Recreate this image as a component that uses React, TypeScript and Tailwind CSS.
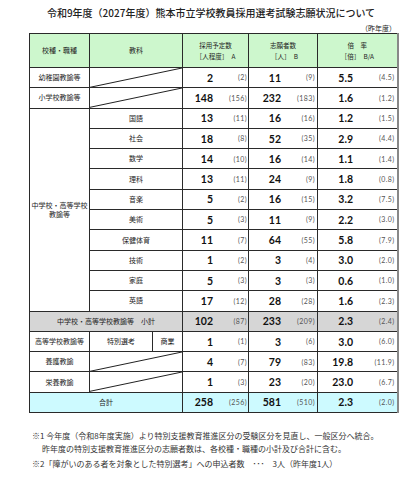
import * as React from "react";

type Vals = [string, string, string, string, string, string];

const subjects: { name: string; v: Vals }[] = [
  { name: "国語", v: ["13", "11", "16", "16", "1.2", "1.5"] },
  { name: "社会", v: ["18", "8", "52", "35", "2.9", "4.4"] },
  { name: "数学", v: ["14", "10", "16", "14", "1.1", "1.4"] },
  { name: "理科", v: ["13", "11", "24", "9", "1.8", "0.8"] },
  { name: "音楽", v: ["5", "2", "16", "15", "3.2", "7.5"] },
  { name: "美術", v: ["5", "3", "11", "9", "2.2", "3.0"] },
  { name: "保健体育", v: ["11", "7", "64", "55", "5.8", "7.9"] },
  { name: "技術", v: ["1", "2", "3", "4", "3.0", "2.0"] },
  { name: "家庭", v: ["5", "3", "3", "3", "0.6", "1.0"] },
  { name: "英語", v: ["17", "12", "28", "28", "1.6", "2.3"] },
];

const cell = "border border-[#2a2a2a] p-0";
const label = "text-[7px] leading-[9px] text-[#222] text-center";

function Nums({ v }: { v: Vals }) {
  return (
    <>
      <td className={cell}>
        <div className="flex items-center">
          <span className="w-[30px] text-right text-[10.5px] leading-[12px] font-bold font-['Lato',sans-serif] text-[#111]">{v[0]}</span>
          <span className="flex-1 text-right pr-[1px] text-[7px] tracking-[0.4px] font-['Lato',sans-serif] text-[#555]">({v[1]})</span>
        </div>
      </td>
      <td className={cell}>
        <div className="flex items-center">
          <span className="w-[32px] text-right text-[10.5px] leading-[12px] font-bold font-['Lato',sans-serif] text-[#111]">{v[2]}</span>
          <span className="flex-1 text-right pr-[2px] text-[7px] tracking-[0.4px] font-['Lato',sans-serif] text-[#555]">({v[3]})</span>
        </div>
      </td>
      <td className={cell}>
        <div className="flex items-center">
          <span className="w-[35px] text-right text-[10.5px] leading-[12px] font-bold font-['Lato',sans-serif] text-[#111]">{v[4]}</span>
          <span className="flex-1 text-right pr-[2px] text-[7px] tracking-[0.4px] font-['Lato',sans-serif] text-[#555]">({v[5]})</span>
        </div>
      </td>
    </>
  );
}

function Slash() {
  return (
    <td colSpan={2} className={`${cell} relative`}>
      <svg className="absolute inset-0 w-full h-full" viewBox="0 0 100 100" preserveAspectRatio="none">
        <line x1="0" y1="100" x2="100" y2="0" stroke="#222" strokeWidth="1" vectorEffect="non-scaling-stroke" />
      </svg>
    </td>
  );
}

export default function App() {
  return (
    <div className="w-[419px] h-[480px] bg-white font-['Noto_Sans_CJK_JP',sans-serif] text-[#222]">
      <h1 className="pt-[7px] text-center text-[10px] leading-[12px] font-medium pl-[3px]">
        令和9年度（2027年度）熊本市立学校教員採用選考試験志願状況について
      </h1>
      <div className="ml-[29px] w-[368px]">
        <p className="mt-[5px] text-right text-[7px] leading-[9px] pr-[1px]">（昨年度）</p>
        <table className="w-[368px] table-fixed border-collapse border-r-2 border-r-[#888]">
          <colgroup>
            <col className="w-[60px]" />
            <col className="w-[63px]" />
            <col className="w-[30px]" />
            <col className="w-[66px]" />
            <col className="w-[69px]" />
            <col className="w-[80px]" />
          </colgroup>
          <tbody>
            {/* Header */}
            <tr className="h-[34px] bg-[#cdf7cd]">
              <td className={`${cell} ${label}`}>校種・職種</td>
              <td colSpan={2} className={`${cell} ${label}`}>教科</td>
              <td className={`${cell} text-[6.5px] leading-[11px] text-center`}>
                採用予定数<br />［人程度］　A
              </td>
              <td className={`${cell} text-[6.5px] leading-[11px] text-center`}>
                志願者数<br />　［人］　B
              </td>
              <td className={`${cell} text-[6.5px] leading-[11px] text-center`}>
                倍　率<br />［倍］　B/A
              </td>
            </tr>

            <tr className="h-[20.3px]">
              <td className={`${cell} ${label}`}>幼稚園教諭等</td>
              <Slash />
              <Nums v={["2", "2", "11", "9", "5.5", "4.5"]} />
            </tr>
            <tr className="h-[20.3px]">
              <td className={`${cell} ${label}`}>小学校教諭等</td>
              <Slash />
              <Nums v={["148", "156", "232", "183", "1.6", "1.2"]} />
            </tr>

            {subjects.map((s, i) => (
              <tr key={s.name} className="h-[20.3px]">
                {i === 0 && (
                  <td rowSpan={10} className={`${cell} ${label}`}>
                    中学校・高等学校<br />教諭等
                  </td>
                )}
                <td colSpan={2} className={`${cell} ${label}`}>{s.name}</td>
                <Nums v={s.v} />
              </tr>
            ))}

            <tr className="h-[20.3px] bg-[#d6d6d6]">
              <td colSpan={3} className={`${cell} ${label}`}>中学校・高等学校教諭等　小計</td>
              <Nums v={["102", "87", "233", "209", "2.3", "2.4"]} />
            </tr>
            <tr className="h-[20.3px]">
              <td className={`${cell} ${label}`}>高等学校教諭等</td>
              <td className={`${cell} ${label}`}>特別選考</td>
              <td className={`${cell} ${label}`}>商業</td>
              <Nums v={["1", "1", "3", "6", "3.0", "6.0"]} />
            </tr>
            <tr className="h-[20.3px]">
              <td className={`${cell} ${label}`}>養護教諭</td>
              <Slash />
              <Nums v={["4", "7", "79", "83", "19.8", "11.9"]} />
            </tr>
            <tr className="h-[20.3px]">
              <td className={`${cell} ${label}`}>栄養教諭</td>
              <Slash />
              <Nums v={["1", "3", "23", "20", "23.0", "6.7"]} />
            </tr>
            <tr className="h-[20.3px] bg-[#cdfaff]">
              <td colSpan={3} className={`${cell} ${label}`}>合計</td>
              <Nums v={["258", "256", "581", "510", "2.3", "2.0"]} />
            </tr>
          </tbody>
        </table>
      </div>

      {/* Notes */}
      <div className="mt-[16px] ml-[32px] text-[8px] leading-[13px] text-[#333]">
        <p>※1 今年度（令和8年度実施）より特別支援教育推進区分の受験区分を見直し、一般区分へ統合。</p>
        <p className="pl-[10px]">昨年度の特別支援教育推進区分の志願者数は、各校種・職種の小計及び合計に含む。</p>
        <p className="mt-[2px]">※2「障がいのある者を対象とした特別選考」への申込者数　･･･　3人（昨年度1人）</p>
      </div>
    </div>
  );
}
